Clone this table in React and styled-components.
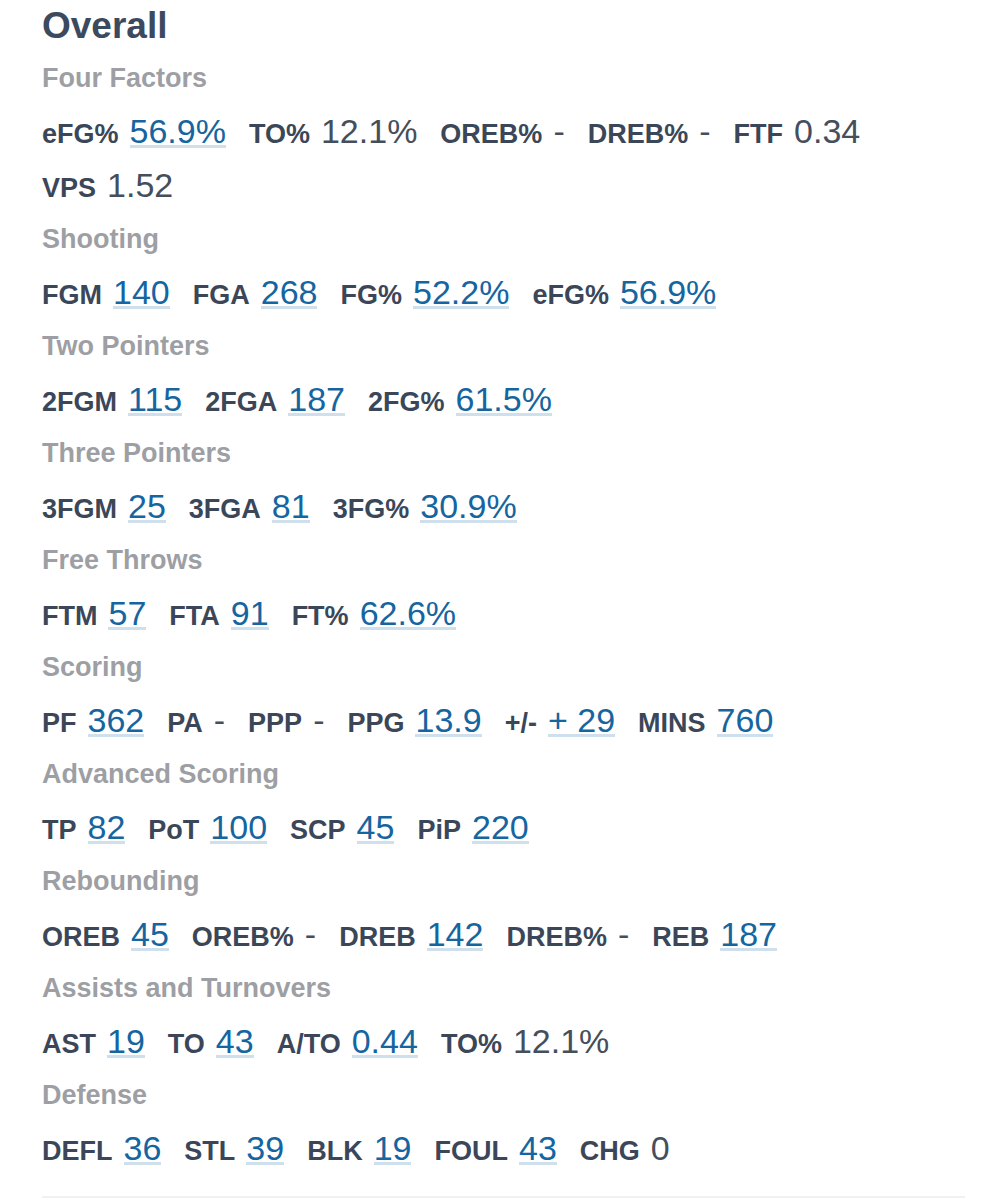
import React from "react";
import styled, { createGlobalStyle } from "styled-components";

const GlobalStyle = createGlobalStyle`
  html, body {
    margin: 0;
    padding: 0;
    background: #ffffff;
  }
  body {
    font-family: "Liberation Sans", Arial, Helvetica, sans-serif;
    -webkit-font-smoothing: antialiased;
  }
`;

const Page = styled.main`
  padding: 7px 38px 0 42px;
  box-sizing: border-box;
  width: 1003px;
`;

const Title = styled.h1`
  margin: 0 0 21px 0;
  font-size: 37px;
  line-height: 1;
  height: 37px;
  font-weight: 700;
  color: #3b4a5e;
`;

const Section = styled.section`
  margin-bottom: 4px;
`;

const Heading = styled.h2`
  margin: 0;
  padding-bottom: 22px;
  font-size: 27px;
  line-height: 1;
  height: 27px;
  font-weight: 700;
  color: #9d9fa4;
`;

const StatList = styled.div`
  display: flex;
  flex-wrap: wrap;
  column-gap: 23px;
`;

const Stat = styled.div`
  display: flex;
  align-items: baseline;
  gap: 11px;
  height: 54px;
`;

const Label = styled.span`
  font-size: 27px;
  line-height: 1;
  font-weight: 700;
  color: #3b4758;
`;

const Value = styled.span`
  font-size: 34px;
  line-height: 1;
  font-weight: 400;
  color: ${(p) => (p.$link ? "#1565a0" : "#454e5b")};
  background: ${(p) =>
    p.$link
      ? "linear-gradient(#cfe0ec, #cfe0ec) left bottom / 100% 3px no-repeat"
      : "none"};
`;

const Divider = styled.hr`
  margin: 11px 0 0 0;
  border: 0;
  height: 2px;
  background: #eff1f3;
`;

const sections = [
  {
    title: "Four Factors",
    stats: [
      ["eFG%", "56.9%", true],
      ["TO%", "12.1%", false],
      ["OREB%", "-", false],
      ["DREB%", "-", false],
      ["FTF", "0.34", false],
      ["VPS", "1.52", false],
    ],
  },
  {
    title: "Shooting",
    stats: [
      ["FGM", "140", true],
      ["FGA", "268", true],
      ["FG%", "52.2%", true],
      ["eFG%", "56.9%", true],
    ],
  },
  {
    title: "Two Pointers",
    stats: [
      ["2FGM", "115", true],
      ["2FGA", "187", true],
      ["2FG%", "61.5%", true],
    ],
  },
  {
    title: "Three Pointers",
    stats: [
      ["3FGM", "25", true],
      ["3FGA", "81", true],
      ["3FG%", "30.9%", true],
    ],
  },
  {
    title: "Free Throws",
    stats: [
      ["FTM", "57", true],
      ["FTA", "91", true],
      ["FT%", "62.6%", true],
    ],
  },
  {
    title: "Scoring",
    stats: [
      ["PF", "362", true],
      ["PA", "-", false],
      ["PPP", "-", false],
      ["PPG", "13.9", true],
      ["+/-", "+ 29", true],
      ["MINS", "760", true],
    ],
  },
  {
    title: "Advanced Scoring",
    stats: [
      ["TP", "82", true],
      ["PoT", "100", true],
      ["SCP", "45", true],
      ["PiP", "220", true],
    ],
  },
  {
    title: "Rebounding",
    stats: [
      ["OREB", "45", true],
      ["OREB%", "-", false],
      ["DREB", "142", true],
      ["DREB%", "-", false],
      ["REB", "187", true],
    ],
  },
  {
    title: "Assists and Turnovers",
    stats: [
      ["AST", "19", true],
      ["TO", "43", true],
      ["A/TO", "0.44", true],
      ["TO%", "12.1%", false],
    ],
  },
  {
    title: "Defense",
    stats: [
      ["DEFL", "36", true],
      ["STL", "39", true],
      ["BLK", "19", true],
      ["FOUL", "43", true],
      ["CHG", "0", false],
    ],
  },
];

export default function App() {
  return (
    <>
      <GlobalStyle />
      <Page>
        <Title>Overall</Title>
        {sections.map((s) => (
          <Section key={s.title}>
            <Heading>{s.title}</Heading>
            <StatList>
              {s.stats.map(([label, value, link], i) => (
                <Stat key={label + i}>
                  <Label>{label}</Label>
                  <Value $link={link}>{value}</Value>
                </Stat>
              ))}
            </StatList>
          </Section>
        ))}
        <Divider />
      </Page>
    </>
  );
}
